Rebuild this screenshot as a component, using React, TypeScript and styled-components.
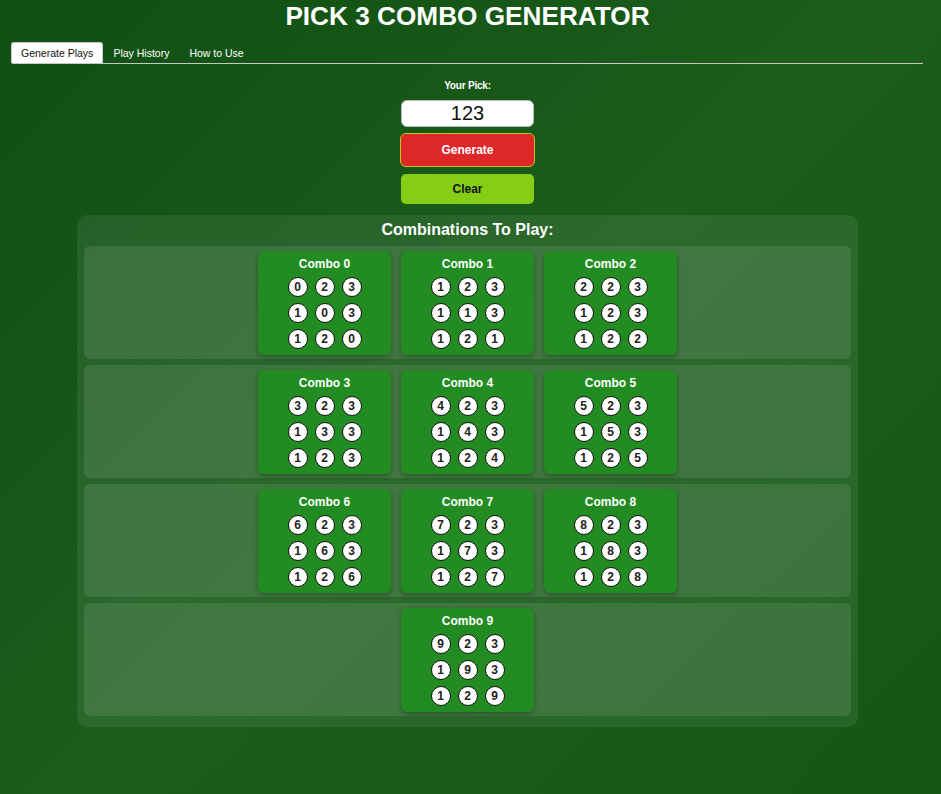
import React, { useState } from "react";
import styled, { createGlobalStyle } from "styled-components";

const GlobalStyle = createGlobalStyle`
  html, body {
    margin: 0;
    padding: 0;
  }
  body {
    min-height: 100vh;
    font-family: "Liberation Sans", Arial, sans-serif;
    color: #fff;
    background: linear-gradient(135deg, #0f5013 0%, #1c5d1c 50%, #145714 100%);
    background-attachment: fixed;
  }
`;

const TABS = ["Generate Plays", "Play History", "How to Use"];

const buildCombos = (pick: string) => {
  const digits = pick.split("").map(Number);
  return Array.from({ length: 10 }, (_, n) =>
    digits.map((_, pos) => digits.map((d, i) => (i === pos ? n : d)))
  );
};

export default function App() {
  const [pick, setPick] = useState("123");
  const [activeTab, setActiveTab] = useState(0);
  const combos = buildCombos(pick.length === 3 ? pick : "123");

  // cards go three to a row
  const rows: number[][][][] = [];
  for (let i = 0; i < combos.length; i += 3) rows.push(combos.slice(i, i + 3));

  return (
    <>
      <GlobalStyle />
      <Page>
        <Title>PICK 3 COMBO GENERATOR</Title>
        <TabBar>
          {TABS.map((t, i) => (
            <Tab key={t} $active={i === activeTab} onClick={() => setActiveTab(i)}>
              {t}
            </Tab>
          ))}
        </TabBar>

        <PickForm>
          <PickLabel>Your Pick:</PickLabel>
          <PickInput
            value={pick}
            maxLength={3}
            onChange={(e) => setPick(e.target.value)}
          />
          <GenerateButton>Generate</GenerateButton>
          <ClearButton onClick={() => setPick("")}>Clear</ClearButton>
        </PickForm>

        <ResultsPanel>
          <ResultsTitle>Combinations To Play:</ResultsTitle>
          <RowList>
            {rows.map((row, r) => (
              <ComboRow key={r}>
                {row.map((combo, c) => (
                  <ComboCard key={c}>
                    <ComboName>Combo {r * 3 + c}</ComboName>
                    <BallGrid>
                      {combo.map((line, l) => (
                        <BallLine key={l}>
                          {line.map((d, k) => (
                            <Ball key={k}>{d}</Ball>
                          ))}
                        </BallLine>
                      ))}
                    </BallGrid>
                  </ComboCard>
                ))}
              </ComboRow>
            ))}
          </RowList>
        </ResultsPanel>
      </Page>
    </>
  );
}

const Page = styled.div`
  padding: 1px 18px 40px 12px;
`;

const Title = styled.h1`
  margin: 0;
  font-size: 26.2px;
  line-height: 30px;
  font-weight: bold;
  text-align: center;
  color: #fff;
`;

const TabBar = styled.div`
  display: flex;
  margin-top: 11px;
  border-bottom: 1px solid #c8c8c8;
`;

const Tab = styled.button<{ $active: boolean }>`
  font-family: inherit;
  font-size: 10.5px;
  line-height: 20px;
  padding: 0 9px;
  margin-left: ${(p) => (p.$active ? "-1px" : "0")};
  border: 1px solid ${(p) => (p.$active ? "#c8c8c8" : "transparent")};
  border-bottom: none;
  border-radius: 3px 3px 0 0;
  background: ${(p) => (p.$active ? "#fff" : "transparent")};
  color: ${(p) => (p.$active ? "#111" : "#fff")};
  cursor: pointer;
`;

const PickForm = styled.div`
  display: flex;
  flex-direction: column;
  align-items: center;
  margin-top: 16px;
`;

const PickLabel = styled.label`
  font-size: 10px;
  font-weight: bold;
  letter-spacing: -0.2px;
  line-height: 12px;
`;

const PickInput = styled.input`
  box-sizing: border-box;
  width: 133px;
  height: 27px;
  margin-top: 8px;
  border: 1px solid #bdbdbd;
  border-radius: 6px;
  font-family: inherit;
  font-size: 20px;
  text-align: center;
  color: #111;
  background: #fff;
  outline: none;
`;

const ActionButton = styled.button`
  box-sizing: border-box;
  font-family: inherit;
  font-size: 12px;
  font-weight: bold;
  cursor: pointer;
`;

const GenerateButton = styled(ActionButton)`
  width: 135px;
  height: 34px;
  margin-top: 6px;
  background: #de2727;
  color: #fff;
  border: 1px solid #c8c21c;
  border-radius: 6px;
`;

const ClearButton = styled(ActionButton)`
  width: 133px;
  height: 30px;
  margin-top: 7px;
  background: #86cd16;
  color: #111;
  border: none;
  border-radius: 5px;
`;

const ResultsPanel = styled.section`
  width: 781px;
  box-sizing: border-box;
  margin: 11px auto 0;
  padding: 6px 7px 11px;
  border-radius: 10px;
  background: rgba(255, 255, 255, 0.075);
`;

const ResultsTitle = styled.h2`
  margin: 0 0 7px;
  font-size: 16px;
  line-height: 18px;
  font-weight: bold;
  text-align: center;
`;

const RowList = styled.div`
  display: flex;
  flex-direction: column;
  gap: 6px;
`;

const ComboRow = styled.div`
  display: flex;
  justify-content: center;
  gap: 10px;
  padding: 5px 5px 4px;
  border-radius: 6px;
  background: rgba(255, 255, 255, 0.1);
`;

const ComboCard = styled.div`
  width: 133px;
  padding: 6px 0;
  border-radius: 6px;
  background: #228b22;
  box-shadow: 0 2px 5px rgba(0, 0, 0, 0.3);
  text-align: center;
`;

const ComboName = styled.div`
  font-size: 12px;
  font-weight: bold;
  line-height: 14px;
  margin-bottom: 6px;
`;

const BallGrid = styled.div`
  display: flex;
  flex-direction: column;
  gap: 6px;
`;

const BallLine = styled.div`
  display: flex;
  justify-content: center;
  gap: 7px;
`;

const Ball = styled.span`
  box-sizing: border-box;
  width: 20px;
  height: 20px;
  display: flex;
  align-items: center;
  justify-content: center;
  border-radius: 50%;
  border: 1.5px solid #111;
  background: #fff;
  color: #222;
  font-size: 12px;
  font-weight: bold;
`;
